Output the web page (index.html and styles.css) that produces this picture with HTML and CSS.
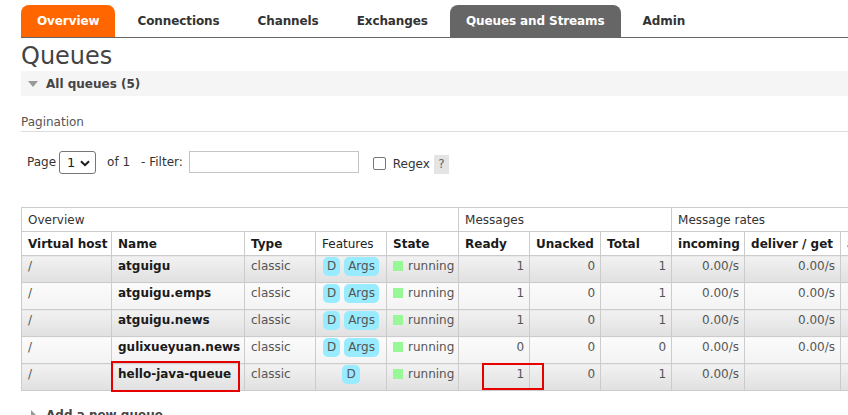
FILE: index.html
```html
<!DOCTYPE html>
<html lang="en">
<head>
<meta charset="utf-8">
<title>RabbitMQ Management: Queues</title>
<link rel="stylesheet" href="styles.css">
</head>
<body>
<div class="page">
  <nav class="menu">
    <a class="tab tab-home">Overview</a>
    <a class="tab">Connections</a>
    <a class="tab">Channels</a>
    <a class="tab">Exchanges</a>
    <a class="tab tab-current">Queues and Streams</a>
    <a class="tab">Admin</a>
  </nav>

  <h1 class="title">Queues</h1>

  <div class="section-head">
    <span class="tri-down"></span>
    <span>All queues (5)</span>
  </div>

  <div class="pag-title">Pagination</div>

  <div class="filter-row">
    <span class="lbl">Page</span>
    <span class="select-wrap">
      <select class="page-select"><option>1</option></select>
      <svg class="chev" width="10" height="7" viewBox="0 0 10 7"><path d="M1 1.2l4 4 4-4" fill="none" stroke="#1a1a1a" stroke-width="2"/></svg>
    </span>
    <span class="lbl of">of 1</span>
    <span class="lbl filter">- Filter:</span>
    <input class="filter-input" type="text">
    <input class="regex-box" type="checkbox">
    <span class="lbl regex">Regex</span>
    <span class="help">?</span>
  </div>

  <table class="queues">
    <colgroup>
      <col class="w-vhost"><col class="w-name"><col class="w-type"><col class="w-feat"><col class="w-state">
      <col class="w-ready"><col class="w-unacked"><col class="w-total">
      <col class="w-in"><col class="w-deliver"><col class="w-ack">
    </colgroup>
    <thead>
      <tr class="group-row">
        <th colspan="5">Overview</th>
        <th colspan="3">Messages</th>
        <th colspan="3">Message rates</th>
      </tr>
      <tr class="head-row">
        <th>Virtual host</th>
        <th>Name</th>
        <th>Type</th>
        <th class="plain">Features</th>
        <th>State</th>
        <th>Ready</th>
        <th>Unacked</th>
        <th>Total</th>
        <th>incoming</th>
        <th>deliver / get</th>
        <th>ack</th>
      </tr>
    </thead>
    <tbody>
      <tr class="alt1">
        <td>/</td>
        <td class="name">atguigu</td>
        <td>classic</td>
        <td class="feat"><abbr class="badge">D</abbr> <abbr class="badge">Args</abbr></td>
        <td><span class="dot"></span>running</td>
        <td class="num">1</td>
        <td class="num">0</td>
        <td class="num">1</td>
        <td class="num">0.00/s</td>
        <td class="num">0.00/s</td>
        <td class="num"></td>
      </tr>
      <tr class="alt2">
        <td>/</td>
        <td class="name">atguigu.emps</td>
        <td>classic</td>
        <td class="feat"><abbr class="badge">D</abbr> <abbr class="badge">Args</abbr></td>
        <td><span class="dot"></span>running</td>
        <td class="num">1</td>
        <td class="num">0</td>
        <td class="num">1</td>
        <td class="num">0.00/s</td>
        <td class="num">0.00/s</td>
        <td class="num"></td>
      </tr>
      <tr class="alt1">
        <td>/</td>
        <td class="name">atguigu.news</td>
        <td>classic</td>
        <td class="feat"><abbr class="badge">D</abbr> <abbr class="badge">Args</abbr></td>
        <td><span class="dot"></span>running</td>
        <td class="num">1</td>
        <td class="num">0</td>
        <td class="num">1</td>
        <td class="num">0.00/s</td>
        <td class="num">0.00/s</td>
        <td class="num"></td>
      </tr>
      <tr class="alt2">
        <td>/</td>
        <td class="name">gulixueyuan.news</td>
        <td>classic</td>
        <td class="feat"><abbr class="badge">D</abbr> <abbr class="badge">Args</abbr></td>
        <td><span class="dot"></span>running</td>
        <td class="num">0</td>
        <td class="num">0</td>
        <td class="num">0</td>
        <td class="num">0.00/s</td>
        <td class="num">0.00/s</td>
        <td class="num"></td>
      </tr>
      <tr class="alt1">
        <td>/</td>
        <td class="name marked">hello-java-queue<span class="mark mark-name"></span></td>
        <td>classic</td>
        <td class="feat"><abbr class="badge">D</abbr></td>
        <td><span class="dot"></span>running</td>
        <td class="num marked">1<span class="mark mark-ready"></span></td>
        <td class="num">0</td>
        <td class="num">1</td>
        <td class="num">0.00/s</td>
        <td class="num"></td>
        <td class="num"></td>
      </tr>
    </tbody>
  </table>

  <div class="section-head plain-head">
    <span class="tri-right"></span>
    <span>Add a new queue</span>
  </div>
</div>
</body>
</html>
```

FILE: styles.css
```css
html, body {
  margin: 0;
  padding: 0;
  overflow: hidden;
}

body {
  width: 848px;
  height: 415px;
  background: #fff;
  color: #484848;
  font-family: "DejaVu Sans", Verdana, sans-serif;
  font-size: 12px;
}

.page {
  padding-left: 21px;
}

/* ---------- menu ---------- */
.menu {
  display: flex;
  gap: 6px;
  height: 32px;
  margin-top: 5px;
  border-bottom: 1px solid #666;
}

.tab {
  padding: 1px 16px 0;
  line-height: 31px;
  font-weight: bold;
  letter-spacing: -0.1px;
  color: #333;
  text-decoration: none;
  border-radius: 8px 8px 0 0;
  white-space: nowrap;
}

.tab-home {
  background: #f60;
  color: #fff;
}

.tab-current {
  background: #666;
  color: #fff;
}

/* ---------- title ---------- */
.title {
  margin: 0;
  padding-top: 4px;
  font-size: 24px;
  line-height: 29px;
  font-weight: normal;
  color: #444;
}

.section-head {
  display: flex;
  align-items: center;
  height: 25px;
  background: #f5f5f5;
  font-weight: bold;
  color: #444;
}

.tri-down {
  width: 0;
  height: 0;
  margin: 0 8px 0 7px;
  border-left: 5px solid transparent;
  border-right: 5px solid transparent;
  border-top: 6px solid #999;
}

.tri-right {
  width: 0;
  height: 0;
  margin: 0 10px 0 10px;
  border-top: 5px solid transparent;
  border-bottom: 5px solid transparent;
  border-left: 5px solid #999;
}

.plain-head {
  background: #fff;
  margin-top: 11px;
}

/* ---------- pagination ---------- */
.pag-title {
  margin-top: 17px;
  line-height: 18px;
  color: #555;
  border-bottom: 1px solid #ddd;
}

.filter-row {
  display: flex;
  align-items: center;
  height: 24px;
  margin-top: 18px;
  padding-left: 6px;
  color: #333;
}

.select-wrap {
  position: relative;
  display: inline-flex;
  margin-left: 3px;
}

.page-select {
  appearance: none;
  -webkit-appearance: none;
  width: 37px;
  height: 23px;
  margin: 0;
  padding: 0 0 0 7px;
  border: 1px solid #767676;
  border-radius: 3px;
  background: #fff;
  color: #222;
  font-family: "DejaVu Sans", Verdana, sans-serif;
  font-size: 13px;
}

.chev {
  position: absolute;
  left: 21px;
  top: 9px;
  pointer-events: none;
}

.of {
  margin-left: 11px;
}

.filter {
  margin-left: 11px;
}

.filter-input {
  width: 170px;
  height: 22px;
  margin: 0 0 0 6px;
  padding: 0;
  box-sizing: border-box;
  border: 1px solid #c4c4c4;
  border-radius: 0;
}

.regex-box {
  appearance: none;
  -webkit-appearance: none;
  width: 13px;
  height: 13px;
  margin: 2px 0 0 14px;
  border: 1px solid #767676;
  border-radius: 2px;
  background: #fff;
}

.regex {
  margin-left: 7px;
  margin-top: 3px;
}

.help {
  width: 15px;
  height: 19px;
  margin-left: 4px;
  margin-top: 4px;
  background: #e4e4e4;
  color: #666;
  text-align: center;
  line-height: 19px;
}

/* ---------- table ---------- */
.queues {
  width: 900px;
  margin-top: 33px;
  table-layout: fixed;
  border-collapse: collapse;
  border: 1px solid #ccc;
}

.w-vhost { width: 90px; }
.w-name { width: 133px; }
.w-type { width: 71px; }
.w-feat { width: 71px; }
.w-state { width: 72px; }
.w-ready { width: 71px; }
.w-unacked { width: 71px; }
.w-total { width: 71px; }
.w-in { width: 73px; }
.w-deliver { width: 96px; }
.w-ack { width: 80px; }

.queues th,
.queues td {
  border: 1px solid #ccc;
  white-space: nowrap;
  overflow: visible;
}

.queues th {
  height: 23px;
  padding: 0 6px;
  text-align: left;
  line-height: 14px;
  background: #fff;
}

.group-row th {
  font-weight: normal;
  color: #333;
}

.head-row th {
  font-weight: bold;
  color: #1a1a1a;
}

.head-row th.plain {
  font-weight: normal;
  color: #222;
}

.queues td {
  height: 27px;
  box-sizing: border-box;
  padding: 3px 6px 0;
  vertical-align: top;
  line-height: 14px;
  color: #555;
}

.alt1 td {
  background: linear-gradient(#f2f2f2, #e0e0e0);
}

.alt2 td {
  background: linear-gradient(#fbfbfb, #f3f3f3);
}

.queues td.name {
  font-weight: bold;
  color: #1a1a1a;
}

.queues td.num {
  text-align: right;
  padding-right: 5px;
}

.queues td.feat {
  text-align: center;
  padding-top: 1px;
}

.badge {
  display: inline-block;
  padding: 1px 4px 2px;
  line-height: 16px;
  border-radius: 5px;
  background: #99ebff;
  color: #555;
  text-decoration: none;
}

.dot {
  display: inline-block;
  width: 10px;
  height: 10px;
  margin-right: 5px;
  vertical-align: -1px;
  background: #98f898;
}

.marked {
  position: relative;
}

.mark {
  position: absolute;
  box-sizing: border-box;
  border: 2px solid #e60000;
}

.mark-name {
  left: -1px;
  top: -3px;
  width: 129px;
  height: 31px;
}

.mark-ready {
  left: 23px;
  top: -1px;
  width: 62px;
  height: 27px;
}
```
